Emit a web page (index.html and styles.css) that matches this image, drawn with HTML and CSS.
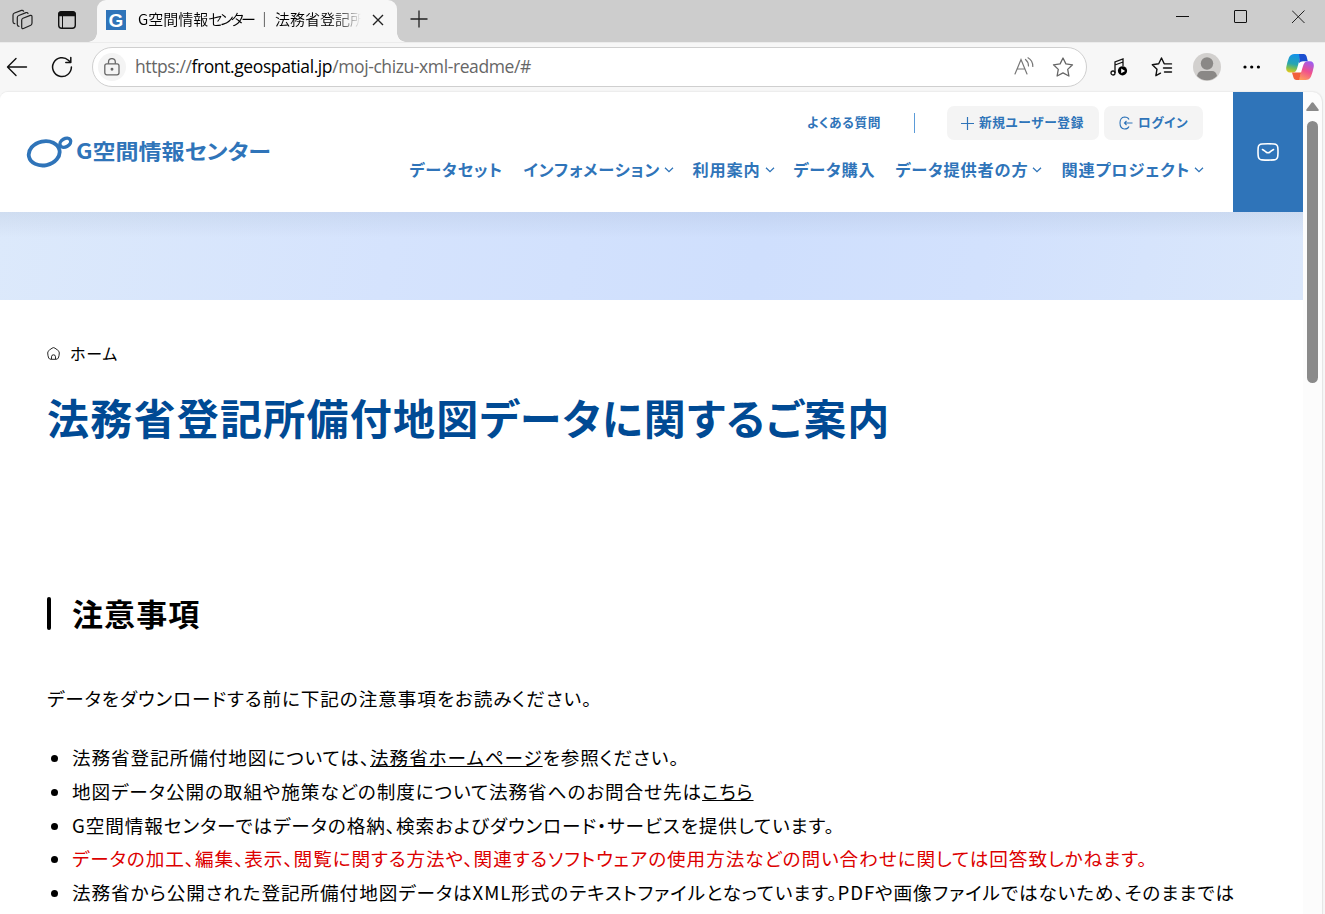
FILE: index.html
```html
<!DOCTYPE html>
<html lang="ja">
<head>
    <meta charset="UTF-8">
    <meta name="viewport" content="width=device-width, initial-scale=1.0">
    <title>法務省登記所備付地図データに関するご案内</title>
    <link rel="stylesheet" href="styles.css">
</head>
<body>
    <div class="tabbar">
        <svg class="tab-icon" width="24" height="24" viewBox="0 0 24 24" fill="none" stroke="#222" stroke-width="1.2" stroke-linejoin="round" stroke-linecap="round">
            <path d="M13 10.2 L20.3 7.4 Q22 7 22 8.8 V15 Q22 16.5 20.8 17.2 L13.5 20.5 Q11.7 21 11.7 19.3 V12 Q11.7 10.7 13 10.2Z"/>
            <path d="M9 18.3 Q7.3 18.2 7.3 16.5 V9.5 Q7.3 8 8.8 7.5 L16 4.6 Q17.6 4.2 18 5.5"/>
            <path d="M4.8 15.7 Q3 15.5 3 13.8 V7 Q3 5.6 4.5 5 L11.5 2.4 Q13 2 13.6 3.2"/>
        </svg>
        <svg class="tab-icon second" width="20" height="20" viewBox="0 0 20 20" fill="none" stroke="#111" stroke-width="1.4">
            <rect x="1.7" y="1.7" width="16.6" height="16.6" rx="3"/>
            <path d="M2 5.5V4Q2 2 4 2H16Q18 2 18 4V5.5Z" fill="#111"/>
            <path d="M5.5 6V18" stroke-width="1"/>
        </svg>
        <div class="tab">
            <svg class="favicon" width="20" height="20" viewBox="0 0 20 20">
                <rect width="20" height="20" fill="#2f74b9"/>
                <text x="10" y="17" text-anchor="middle" class="favicon-letter">G</text>
            </svg>
            <span class="tab-title">G空間情報<span class="narrow">センター</span> ｜ 法務省登記所</span>
            <svg class="tab-close" width="12" height="12" viewBox="0 0 12 12" stroke="#222" stroke-width="1.4"><path d="M1 1L11 11M11 1L1 11"/></svg>
        </div>
        <svg class="new-tab" width="18" height="18" viewBox="0 0 18 18" stroke="#222" stroke-width="1.3"><path d="M9 0.5V17.5M0.5 9H17.5"/></svg>
        <div class="window-buttons">
            <svg width="14" height="14" viewBox="0 0 14 14" stroke="#111"><path d="M0 6.5H13"/></svg>
            <svg width="14" height="14" viewBox="0 0 14 14" stroke="#111" fill="none"><rect x="0.5" y="0.5" width="12" height="12" rx="0.5"/></svg>
            <svg width="14" height="14" viewBox="0 0 14 14" stroke="#222"><path d="M0 0.5L12.5 13M12.5 0.5L0 13"/></svg>
        </div>
    </div>

    <div class="toolbar">
        <svg class="back" width="22" height="20" viewBox="0 0 22 20" fill="none" stroke="#111" stroke-width="1.4" stroke-linecap="round" stroke-linejoin="round"><path d="M20.5 10H2M10 1.5L1.5 10L10 18.5"/></svg>
        <svg class="reload" width="22" height="22" viewBox="0 0 22 22" fill="none" stroke="#111" stroke-width="1.5" stroke-linecap="round" stroke-linejoin="round"><path d="M20.4 11A9.4 9.4 0 1 1 17.4 4.2L19.6 6.3M19.8 1.5V6.5H14.8"/></svg>
        <div class="address">
            <span class="lock">
                <svg width="16" height="18" viewBox="0 0 16 18" fill="none" stroke="#666" stroke-width="1.3"><rect x="0.8" y="5.8" width="14.2" height="11" rx="2"/><path d="M4.5 5.8V4A3.4 3.4 0 0 1 11.3 4V5.8"/><circle cx="8" cy="11.3" r="0.8" fill="#555"/></svg>
            </span>
            <span class="url">https://<b>front.geospatial.jp</b>/moj-chizu-xml-readme/#</span>
            <svg class="read" width="20" height="20" viewBox="0 0 20 20" fill="none" stroke="#777" stroke-width="1.2" stroke-linecap="round"><path d="M1 17L7 2.5L13 17M3.2 12H10.8M11.5 2.5Q14.5 5 14.5 9M14 0.8Q18.8 3.500 18.8 9.500"/></svg>
            <svg class="star" width="22" height="20" viewBox="0 0 22 20" fill="none" stroke="#666" stroke-width="1.3" stroke-linejoin="round"><path d="M11 1L13.9 6.9L20.5 7.8L15.7 12.4L16.9 19L11 15.9L5.1 19L6.3 12.4L1.5 7.8L8.1 6.9Z"/></svg>
        </div>
        <svg class="music" width="18" height="18" viewBox="0 0 18 18" fill="none" stroke="#111" stroke-width="1.3"><path d="M5 15V4L13 1V8M5 7L13 4"/><circle cx="3" cy="15" r="2"/><circle cx="12.5" cy="12.8" r="4.6" fill="#000" stroke="none"/><path d="M11.2 10.6L15.1 12.9L11.2 15.2Z" fill="#fff" stroke="none"/></svg>
        <svg class="favorites" width="22" height="20" viewBox="0 0 22 20" fill="none" stroke="#111" stroke-width="1.4" stroke-linejoin="round" stroke-linecap="round"><path d="M16 6.9L13.2 6.7L10.5 1L7.7 6.8L1.3 7.7L6 12.2L4.9 18.7L9.5 16.2M14 6.9H20.5M12.5 11H20.5M13.5 15H20.5"/></svg>
        <svg class="avatar" width="28" height="28" viewBox="0 0 28 28"><circle cx="14" cy="14" r="14" fill="#d2d0ce"/><circle cx="14" cy="10.5" r="6.2" fill="#8a8886"/><path d="M4 23Q5 18 9 18H19Q23 18 24 23A14 14 0 0 1 4 23Z" fill="#8a8886"/></svg>
        <svg class="more" width="18" height="4" viewBox="0 0 18 4"><circle cx="2" cy="2" r="1.6"/><circle cx="8.7" cy="2" r="1.6"/><circle cx="15.4" cy="2" r="1.6"/></svg>
        <svg class="copilot" width="28" height="26" viewBox="0 0 28 26">
            <defs>
                <linearGradient id="cop-a" x1="0.3" y1="0" x2="0.1" y2="1"><stop offset="0" stop-color="#1593e8"/><stop offset=".5" stop-color="#27a5b0"/><stop offset=".75" stop-color="#7fbf50"/><stop offset="1" stop-color="#f3cb16"/></linearGradient>
                <linearGradient id="cop-b" x1="0.7" y1="0" x2="0.3" y2="1"><stop offset="0" stop-color="#9d5cf0"/><stop offset=".5" stop-color="#f0508e"/><stop offset="1" stop-color="#ff9d5c"/></linearGradient>
            </defs>
            <path d="M13.500 8H18.500L15.500 18.500H10Z" fill="#fff"/>
            <path d="M8.5 0H18Q15 0 14 4L11.2 14Q10 18.5 6.5 18.5H4Q-.5 18 .3 13Q1.2 8 3 3.5Q4.5 0 8.5 0Z" fill="url(#cop-a)"/>
            <path d="M13 0H18Q20 0 20.6 2.5L21.8 7.2H17Q14.5 7.2 13 9L13.6 4Z" fill="#1b4fd0"/>
            <path d="M19.5 26H10.5Q13 25.5 14 22L17 12Q18.3 7.2 21.5 7.2H24Q28.5 7.5 27.7 13Q26.8 18 25 22.5Q23.5 26 19.5 26Z" fill="url(#cop-b)"/>
            <path d="M13 26H10.5Q8 26 7.3 23L6 18.5H15.2L14.2 22Z" fill="#f2603a"/>
        </svg>
    </div>

    <div class="viewport">
        <div class="page">
            <header class="header">
                <svg class="logo" width="246" height="34" viewBox="0 0 246 34">
                    <g fill="none" stroke="#2f74b9">
                        <ellipse cx="18.2" cy="18.3" rx="15.6" ry="12" stroke-width="3.8" transform="rotate(-12 18.2 18.3)"/>
                        <ellipse cx="39.3" cy="7.8" rx="5.800" ry="4" stroke-width="3.5" transform="rotate(-30 39.3 7.8)"/>
                    </g>
                    <text x="50" y="24" textLength="195" lengthAdjust="spacingAndGlyphs" class="logo-text">G空間情報センター</text>
                </svg>
                <div class="header-menu">
                    <div class="sub-nav">
                        <a class="faq">よくある質問</a>
                        <a class="pill register"><svg width="13" height="13" viewBox="0 0 13 13" stroke="#2f74b9" stroke-width="1.2"><path d="M6.5 0V13M0 6.5H13"/></svg>新規ユーザー登録</a>
                        <a class="pill login"><svg width="14" height="14" viewBox="0 0 14 14" fill="none" stroke="#2f74b9" stroke-width="1.1"><path d="M10 3.5Q9 1 5.5 1Q1 1.5 1 7Q1 12.5 5.5 13Q9 13 10 10.5M13.5 7H5.5M7.5 5L5.5 7L7.5 9"/></svg>ログイン</a>
                    </div>
                    <nav class="main-nav">
                        <a class="n1">データセット</a>
                        <a class="n2">インフォメーション<svg width="10" height="6" viewBox="0 0 10 6"><path d="M1 0.8L5 4.6L9 0.8"/></svg></a>
                        <a class="n3">利用案内<svg width="10" height="6" viewBox="0 0 10 6"><path d="M1 0.8L5 4.6L9 0.8"/></svg></a>
                        <a class="n4">データ購入</a>
                        <a class="n5">データ提供者の方<svg width="10" height="6" viewBox="0 0 10 6"><path d="M1 0.8L5 4.6L9 0.8"/></svg></a>
                        <a class="n6">関連プロジェクト<svg width="10" height="6" viewBox="0 0 10 6"><path d="M1 0.8L5 4.6L9 0.8"/></svg></a>
                    </nav>
                </div>
                <a class="mail"><svg width="22" height="18" viewBox="0 0 22 18" fill="none" stroke="#fff" stroke-width="1.6" stroke-linecap="round"><path d="M5 1Q11 .6 17 1Q20.5 1.2 20.8 4.5Q21.2 9 20.8 13Q20.5 16.6 17 16.9Q11 17.3 5 16.9Q1.5 16.6 1.2 13Q.8 9 1.2 4.5Q1.5 1.2 5 1ZM5.5 6.5Q8 8 9 9Q11 10.5 13 9Q14 8 16.5 6.5"/></svg></a>
            </header>
            <div class="hero"></div>
            <main class="content">
                <div class="breadcrumb"><svg width="13" height="13" viewBox="0 0 13 13" fill="none" stroke="#111" stroke-width="0.9"><path d="M6.5 .6Q7.5 .6 10.5 3Q12.5 4.3 12.3 6Q12.2 9 11.3 11Q10.8 12.2 9 12.3H4Q2.2 12.2 1.7 11Q.8 9 .7 6Q.5 4.3 2.5 3Q5.5 .6 6.5 .6Z"/><path d="M4.5 12V9.8A2 2 0 0 1 8.5 9.8V12"/></svg>ホーム</div>
                <h1>法務省登記所備付地図データに関するご案内</h1>
                <h2>注意事項</h2>
                <p class="lead">データをダウンロードする前に下記の注意事項をお読みください。</p>
                <ul class="notes">
                    <li>法務省登記所備付地図については、<a>法務省ホームページ</a>を参照ください。</li>
                    <li>地図データ公開の取組や施策などの制度について法務省へのお問合せ先は<a>こちら</a></li>
                    <li>G空間情報センターではデータの格納、検索およびダウンロード・サービスを提供しています。</li>
                    <li><span class="warning">データの加工、編集、表示、閲覧に関する方法や、関連するソフトウェアの使用方法などの問い合わせに関しては回答致しかねます。</span></li>
                    <li>法務省から公開された登記所備付地図データはXML形式のテキストファイルとなっています。PDFや画像ファイルではないため、そのままでは</li>
                </ul>
            </main>
        </div>
        <div class="scrollbar">
            <svg width="13" height="9" viewBox="0 0 13 9" fill="#8a8a8a"><path d="M5.5 .8Q6.5 -.4 7.5 .8L12.6 7.5Q13 9 11.8 9H1.2Q0 9 .4 7.5Z"/></svg>
            <div class="thumb"></div>
        </div>
    </div>
</body>
</html>
```
FILE: styles.css
```css
* {
    box-sizing: border-box;
}
body {
    margin: 0;
    height: 914px;
    overflow: hidden;
    background: #f7f7f7;
    font-family: "Noto Sans CJK JP", sans-serif;
    color: #000;
}
svg {
    display: block;
    flex: none;
}

/* browser frame */
.tabbar {
    display: flex;
    height: 42px;
    background: #cdcdcd;
}
.tab-icon {
    margin: 8px 0 0 10px;
}
.tab-icon.second {
    margin: 10px 0 0 23px;
}
.tab {
    position: relative;
    display: flex;
    align-items: center;
    width: 300px;
    height: 42px;
    margin-left: 20px;
    padding: 0 14px 2px 9px;
    background: #f7f7f7;
    border-radius: 9px 9px 0 0;
}
.tab::before,
.tab::after {
    content: "";
    position: absolute;
    bottom: 0;
    width: 9px;
    height: 9px;
}
.tab::before {
    left: -9px;
    background: radial-gradient(circle at 0 0, transparent 8.5px, #f7f7f7 9px);
}
.tab::after {
    right: -9px;
    background: radial-gradient(circle at 100% 0, transparent 8.5px, #f7f7f7 9px);
}
.favicon-letter {
    font: bold 19px "Liberation Sans", sans-serif;
    fill: #fff;
}
.tab-title {
    flex: none;
    width: 223px;
    margin: -3px 0 0 12px;
    overflow: hidden;
    white-space: nowrap;
    font-size: 15px;
    font-weight: 350;
    font-feature-settings: "palt";
    mask-image: linear-gradient(to right, #000 88%, transparent);
}
.narrow {
    letter-spacing: -2.6px;
}
.tab-close {
    margin-left: 10.5px;
}
.new-tab {
    margin: 10px 0 0 13px;
}
.window-buttons {
    display: flex;
    gap: 44px;
    margin: 10px 19px 0 auto;
}
.toolbar {
    display: flex;
    align-items: center;
    height: 50px;
    padding-bottom: 2px;
    border-top: 1px solid #ececec;
}
.back {
    margin-left: 6px;
}
.reload {
    margin-left: 23px;
}
.address {
    display: flex;
    align-items: center;
    width: 995px;
    height: 40px;
    margin-left: 19px;
    padding: 0 12px 0 5px;
    background: #fff;
    border: 1px solid #cfcfcf;
    border-radius: 20px;
}
.lock {
    display: flex;
    align-items: center;
    justify-content: center;
    width: 28px;
    height: 28px;
    background: #f4f4f4;
    border-radius: 50%;
}
.url {
    margin: -2px 0 0 9px;
    font: 17.5px "Open Sans", sans-serif;
    letter-spacing: -0.4px;
    color: #666;
}
.url b {
    font-weight: normal;
    color: #000;
}
.read {
    margin-left: auto;
}
.star {
    margin-left: 18px;
}
.music {
    margin-left: 23px;
}
.favorites {
    margin-left: 23px;
}
.avatar {
    margin-left: 20px;
}
.more {
    margin-left: 22px;
}
.copilot {
    margin-left: 25px;
}

/* site */
.viewport {
    display: flex;
    width: 1323px;
    height: 822px;
    background: #fcfcfc;
    border-right: 1px solid #e6e6e6;
    border-radius: 8px 10px 0 0;
    box-shadow: 0 -1px 1px #ebebeb;
    overflow: hidden;
}
.page {
    width: 1303px;
    background: #fff;
    font-feature-settings: "palt";
}
.header {
    display: flex;
    height: 120px;
    color: #2f74b9;
    font-weight: bold;
}
.logo {
    margin: 43px 0 0 26px;
}
.logo-text {
    font-size: 21px;
    fill: #2f74b9;
}
.header-menu {
    width: 794px;
    margin-left: 137px;
    padding-top: 14px;
}
.sub-nav {
    display: flex;
    align-items: center;
    justify-content: flex-end;
    height: 34px;
    font-size: 12.7px;
    letter-spacing: 0.05em;
}
.faq {
    width: 108px;
    height: 20px;
    margin-right: 32px;
    line-height: 18px;
    border-right: 1px solid #5b9bd8;
}
.pill {
    display: flex;
    align-items: center;
    height: 34px;
    padding-bottom: 3px;
    border-radius: 7px;
    background: #f4f4f4;
}
.pill svg {
    margin-top: 3px;
}
.register {
    width: 152px;
    padding-left: 14px;
    gap: 5px;
}
.login {
    width: 99px;
    margin-left: 5px;
    padding-left: 15px;
    gap: 5px;
}
.main-nav {
    display: flex;
    margin: 17px 0 0 0.5px;
    font-size: 16.2px;
    line-height: 24px;
    letter-spacing: 0.05em;
    white-space: nowrap;
}
.main-nav a {
    display: flex;
    align-items: center;
    flex: none;
}
.main-nav svg {
    margin: 2px 0 0 4px;
    fill: none;
    stroke: #2f74b9;
    stroke-width: 1.3;
}
.n1 {
    width: 114px;
}
.n2 {
    width: 169px;
}
.n3 {
    width: 101px;
}
.n4 {
    width: 102px;
}
.n5 {
    width: 166px;
}
.mail {
    display: flex;
    align-items: center;
    justify-content: center;
    width: 70px;
    margin-left: auto;
    background: #2f74b9;
}
.hero {
    height: 88px;
    background:
        linear-gradient(to bottom, rgba(120, 140, 170, 0.13), transparent 26px),
        linear-gradient(100deg, #dce9fb, #d5e3fd 30%, #cfdffd 58%, #d2e1fd 75%, #dae7fb);
}
.content {
    padding: 37px 47px 0;
}
.breadcrumb {
    display: flex;
    align-items: center;
    gap: 10px;
    height: 32px;
    font-size: 16px;
    letter-spacing: 0.05em;
}
h1 {
    margin: 16px 0 0;
    font-size: 42px;
    line-height: 64px;
    letter-spacing: 0.03em;
    color: #004a94;
    white-space: nowrap;
}
h2 {
    display: flex;
    height: 33px;
    margin: 148px 0 0;
    font-size: 31px;
    line-height: 31px;
    letter-spacing: 0.035em;
}
h2::before {
    content: "";
    width: 4px;
    height: 33px;
    margin-right: 21px;
    background: #000;
    border-radius: 2px;
}
.lead {
    margin: 51px 0 0;
    font-size: 18.62px;
    line-height: 34px;
    letter-spacing: 0.05em;
}
.notes {
    margin: 25px 0 0;
    padding-left: 25px;
    font-size: 18.62px;
    line-height: 33.8px;
    letter-spacing: 0.05em;
    white-space: nowrap;
}
.notes a {
    text-decoration: underline;
    text-decoration-thickness: 1px;
}
.warning {
    color: #dc0000;
}
.scrollbar {
    display: flex;
    flex-direction: column;
    align-items: center;
    width: 19px;
    padding-top: 10px;
}
.thumb {
    width: 11px;
    height: 262px;
    margin-top: 10px;
    background: #8a8a8a;
    border-radius: 6px;
}
```
